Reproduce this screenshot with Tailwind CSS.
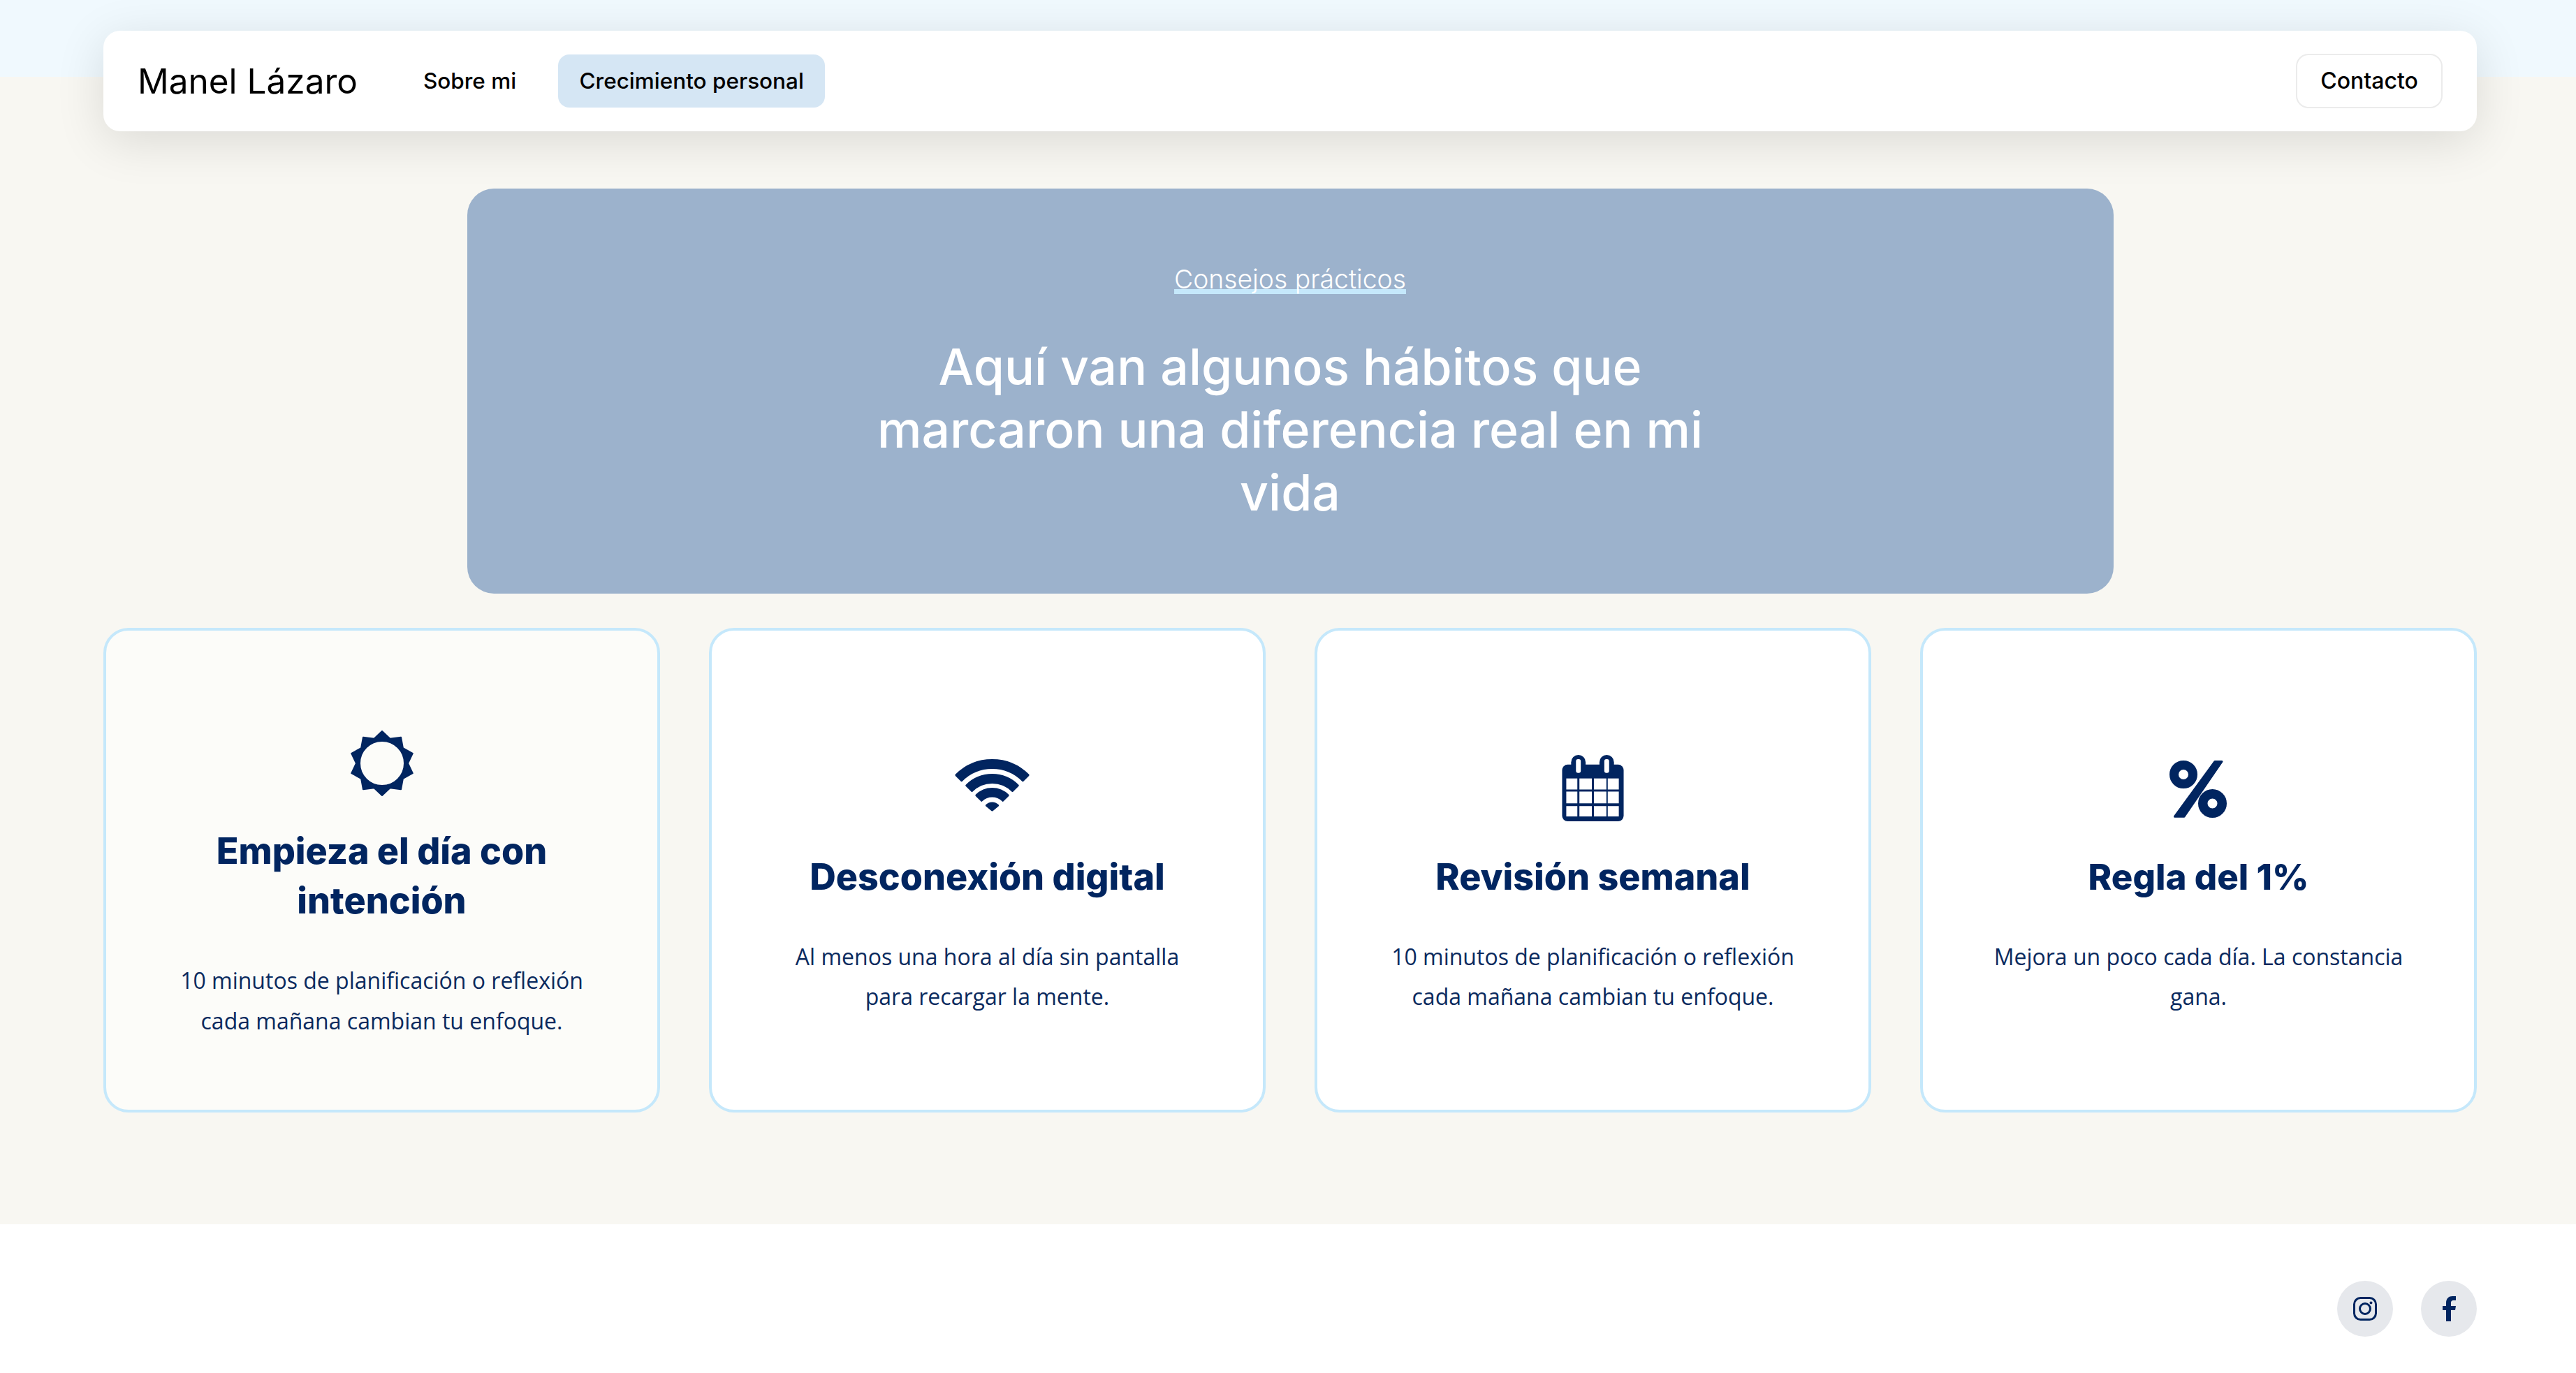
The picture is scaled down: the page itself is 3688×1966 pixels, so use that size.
<!DOCTYPE html>
<html lang="es">

<head>
    <meta charset="UTF-8"/>
    <meta content="width=device-width, initial-scale=1.0" name="viewport"/>
    <script src="https://cdn.jsdelivr.net/npm/@tailwindcss/browser@4"></script>
    <title>Crecimiento personal - Manel Lázaro</title>
</head>

<body class="min-h-screen flex flex-col bg-[linear-gradient(#f0f9fe_110px,#f8f7f2_110px)] font-['Open_Sans',sans-serif] text-[#0a2a5e]">
<main class="flex-auto pl-[148px] pr-[142px] pt-[44px] pb-[160px]">
    <header class="h-[144px] flex items-center justify-between pl-[49px] pr-[49px] bg-white rounded-[24px] shadow-[0_14px_70px_rgba(0,0,0,0.12)] font-['Inter',sans-serif] text-black">
        <nav class="flex items-center">
            <a class="text-[49.5px] mr-[94px]" href="#">Manel Lázaro</a>
            <a class="text-[31.5px] font-medium mr-[60px]" href="#">Sobre mi</a>
            <a class="h-[76px] w-[382px] flex items-center justify-center rounded-[16px] bg-[#d5e6f4] text-[31.5px] font-medium" href="#">Crecimiento personal</a>
        </nav>
        <a class="h-[78px] w-[210px] flex items-center justify-center rounded-[18px] border-2 border-[#ebebeb] text-[32px] font-medium" href="#">Contacto</a>
    </header>

    <section class="w-[2357px] h-[580px] mt-[82px] mx-auto rounded-[38px] bg-[#9cb2cc] flex flex-col items-center pt-[102px] text-white font-['Inter',sans-serif]">
        <p class="text-[37.3px] font-light underline decoration-[#c5e8fb] decoration-[7px] underline-offset-[1px] [text-decoration-skip-ink:none]">Consejos prácticos</p>
        <h1 class="mt-[52px] text-[71.5px] leading-[90px] font-medium text-center">Aquí van algunos hábitos que<br/>marcaron una diferencia real en mi<br/>vida</h1>
    </section>

    <section class="mt-[49px] grid grid-cols-4 gap-[70px]">
        <article class="h-[694px] flex flex-col items-center justify-center pt-[44px] rounded-[36px] border-4 border-[#c5e8fb] bg-[#fcfcf9] text-center">
            <svg class="w-[100px] h-[100px] -mt-[2px]" viewBox="0 0 100 100">
                <path fill="#012560" fill-rule="evenodd" stroke="#012560" stroke-width="2" stroke-linejoin="round" d="M50 4L61.4 14.8L77.05 12.79L79.9 28.2L93.75 35.79L87 50L93.75 64.21L79.9 71.8L77.05 87.21L61.4 85.2L50 96L38.6 85.2L22.95 87.21L20.1 71.8L6.25 64.21L13 50L6.25 35.79L20.1 28.2L22.95 12.79L38.6 14.8ZM50 18A32 32 0 1 0 50 82A32 32 0 1 0 50 18Z"/>
            </svg>
            <h2 class="mt-[40px] w-[640px] text-[52px] leading-[71px] font-extrabold text-[#012560] font-['Inter',sans-serif]">Empieza el día con intención</h2>
            <p class="mt-[50px] w-[600px] text-[32px] leading-[57.6px]">10 minutos de planificación o reflexión cada mañana cambian tu enfoque.</p>
        </article>
        <article class="h-[694px] flex flex-col items-center justify-center pt-[44px] rounded-[36px] border-4 border-[#c5e8fb] bg-white text-center">
            <div class="h-[96px] flex items-end pb-[13px]">
                <svg class="w-[109px] h-[79px] ml-[14px]" viewBox="-2 -2 109 79">
                    <g fill="#012560" stroke="#012560" stroke-width="3" stroke-linejoin="round">
                        <path d="M0.9 22.9A73 73 0 0 1 104.1 22.9L96.34 30.66A62 62 0 0 0 8.66 30.66Z"/>
                        <path d="M15.73 37.73A52 52 0 0 1 89.27 37.73L81.49 45.51A41 41 0 0 0 23.51 45.51Z"/>
                        <path d="M29.87 51.87A32 32 0 0 1 75.13 51.87L67.7 59.3A21.5 21.5 0 0 0 37.3 59.3Z"/>
                        <path d="M44.37 66.37A11.5 11.5 0 0 1 60.63 66.37L52.5 73Z"/>
                    </g>
                </svg>
            </div>
            <h2 class="mt-[43px] w-[640px] text-[52px] leading-[71px] font-extrabold text-[#012560] font-['Inter',sans-serif]">Desconexión digital</h2>
            <p class="mt-[50px] w-[600px] text-[32px] leading-[57px]">Al menos una hora al día sin pantalla para recargar la mente.</p>
        </article>
        <article class="h-[694px] flex flex-col items-center justify-center pt-[44px] rounded-[36px] border-4 border-[#c5e8fb] bg-white text-center">
            <svg class="w-[90px] h-[96px]" viewBox="0 0 90 97">
                <g fill="#012560">
                    <rect x="0" y="14" width="89" height="82" rx="8"/>
                    <rect x="13" y="0" width="21" height="30" rx="10.5"/>
                    <rect x="54" y="0" width="21" height="30" rx="10.5"/>
                </g>
                <g fill="#fff">
                    <rect x="20" y="6" width="7" height="20" rx="3"/>
                    <rect x="61" y="6" width="7" height="20" rx="3"/>
                    <rect x="6" y="34" width="16" height="16"/>
                    <rect x="25" y="34" width="18" height="16"/>
                    <rect x="46" y="34" width="18" height="16"/>
                    <rect x="66" y="34" width="16" height="16"/>
                    <rect x="6" y="53" width="16" height="17"/>
                    <rect x="25" y="53" width="18" height="17"/>
                    <rect x="46" y="53" width="18" height="17"/>
                    <rect x="66" y="53" width="16" height="17"/>
                    <rect x="6" y="74" width="16" height="15"/>
                    <rect x="25" y="74" width="18" height="15"/>
                    <rect x="46" y="74" width="18" height="15"/>
                    <rect x="66" y="74" width="16" height="15"/>
                </g>
            </svg>
            <h2 class="mt-[43px] w-[640px] text-[52px] leading-[71px] font-extrabold text-[#012560] font-['Inter',sans-serif]">Revisión semanal</h2>
            <p class="mt-[50px] w-[600px] text-[32px] leading-[57px]">10 minutos de planificación o reflexión cada mañana cambian tu enfoque.</p>
        </article>
        <article class="h-[694px] flex flex-col items-center justify-center pt-[44px] rounded-[36px] border-4 border-[#c5e8fb] bg-white text-center">
            <div class="h-[96px] flex items-center pt-[2px]">
                <svg class="w-[83px] h-[83px]" viewBox="0 0 83 83">
                    <circle cx="20" cy="20" r="13.5" fill="none" stroke="#012560" stroke-width="13"/>
                    <circle cx="61.5" cy="61.5" r="13.75" fill="none" stroke="#012560" stroke-width="13.5"/>
                    <path fill="#012560" stroke="#012560" stroke-width="3" stroke-linejoin="round" d="M65 1.5H75L21 80.2H7.5Z"/>
                </svg>
            </div>
            <h2 class="mt-[43px] w-[640px] text-[51px] leading-[71px] font-extrabold text-[#012560] font-['Inter',sans-serif]">Regla del 1%</h2>
            <p class="mt-[50px] w-[600px] text-[32px] leading-[57px]">Mejora un poco cada día. La constancia gana.</p>
        </article>
    </section>
</main>

<footer class="h-[214px] bg-white flex justify-end gap-[40px] pt-[81px] pr-[142px]">
    <a class="w-[80px] h-[80px] rounded-full bg-[#e6e8ec] flex items-center justify-center" href="#">
        <svg class="w-[34px] h-[34px]" viewBox="0 0 34 34" fill="none" stroke="#012560" stroke-width="3">
            <rect x="1.5" y="1.5" width="31" height="31" rx="9"/>
            <circle cx="17" cy="17" r="7.5"/>
            <circle cx="25.5" cy="8.5" r="2" fill="#012560" stroke="none"/>
        </svg>
    </a>
    <a class="w-[80px] h-[80px] rounded-full bg-[#e6e8ec] flex items-center justify-center" href="#">
        <svg class="w-[19px] h-[36px]" viewBox="0 0 19 36">
            <path fill="#012560" d="M5 36V20H0V14H5V10C5 3 9 0 14 0H19V6H16C13 6 12 7 12 10V14H19L18 20H12V36Z"/>
        </svg>
    </a>
</footer>
</body>

</html>
